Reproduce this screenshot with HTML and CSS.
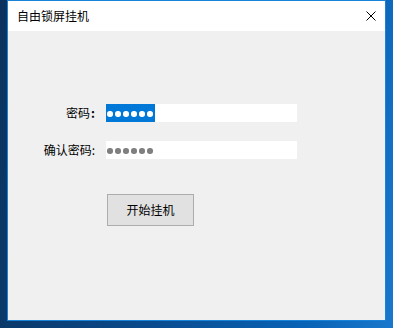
FILE: index.html
```html
<!DOCTYPE html>
<html>
<head>
    <title>自由锁屏挂机</title>
    <link rel="stylesheet" href="styles.css">
</head>
<body>
    <div class="window">
        <div class="titlebar">
            <div class="title">自由锁屏挂机</div>
            <div class="close">
                <svg width="10" height="10" viewBox="0 0 10 10">
                    <path d="M0.5 0.5 L9.5 9.5 M9.5 0.5 L0.5 9.5" stroke="#000" stroke-width="1" fill="none"/>
                </svg>
            </div>
        </div>
        <div class="content">
            <div class="form">
                <div class="label">密码<b>:</b></div>
                <div class="input">
                    <span class="selected">
                        <i class="dot"></i><i class="dot"></i><i class="dot"></i><i class="dot"></i><i class="dot"></i><i class="dot"></i>
                    </span>
                </div>
                <div class="label">确认密码:</div>
                <div class="input">
                    <span class="plain">
                        <i class="dot"></i><i class="dot"></i><i class="dot"></i><i class="dot"></i><i class="dot"></i><i class="dot"></i>
                    </span>
                </div>
            </div>
            <div class="button">开始挂机</div>
        </div>
    </div>
</body>
</html>
```

FILE: styles.css
```css
body {
    margin: 0;
    width: 393px;
    height: 328px;
    overflow: hidden;
    background: linear-gradient(100deg, #0b325c 0%, #0a4a8c 45%, #0862b6 80%, #1a78cc 100%);
    font-family: "Noto Sans CJK SC", "Microsoft YaHei", sans-serif;
    font-size: 12px;
    color: #000;
}
.window {
    margin-left: 7px;
    width: 377px;
    height: 319px;
    border: 1px solid #1883d7;
    display: flex;
    flex-direction: column;
}
.titlebar {
    height: 30px;
    background-color: #fff;
    display: flex;
    align-items: center;
    justify-content: space-between;
}
.title {
    padding-left: 9px;
    line-height: 30px;
}
.close {
    width: 10px;
    height: 10px;
    margin-right: 9px;
    margin-top: -1px;
}
.close svg {
    display: block;
}
.content {
    flex: 1;
    background-color: #f0f0f0;
    padding-top: 73px;
}
.form {
    display: grid;
    grid-template-columns: 88px 191px;
    column-gap: 10px;
    row-gap: 19px;
    align-items: center;
}
.label {
    text-align: right;
    line-height: 18px;
    padding-right: 1px;
}
.label b {
    font-weight: bold;
    padding-left: 1px;
}
.input {
    height: 18px;
    background-color: #fff;
    display: flex;
}
.selected, .plain {
    display: flex;
    align-items: center;
    gap: 2.5px;
    padding: 2px 2px 0 1px;
}
.selected {
    background-color: #0078d7;
}
.dot {
    width: 5.5px;
    height: 5.5px;
    border-radius: 50%;
}
.selected .dot {
    background-color: #fff;
}
.plain .dot {
    background-color: #7f7f7f;
}
.button {
    margin-top: 35px;
    margin-left: 99px;
    width: 85px;
    height: 30px;
    border: 1px solid #adadad;
    background-color: #e1e1e1;
    text-align: center;
    line-height: 30px;
    font-size: 12px;
}
```
